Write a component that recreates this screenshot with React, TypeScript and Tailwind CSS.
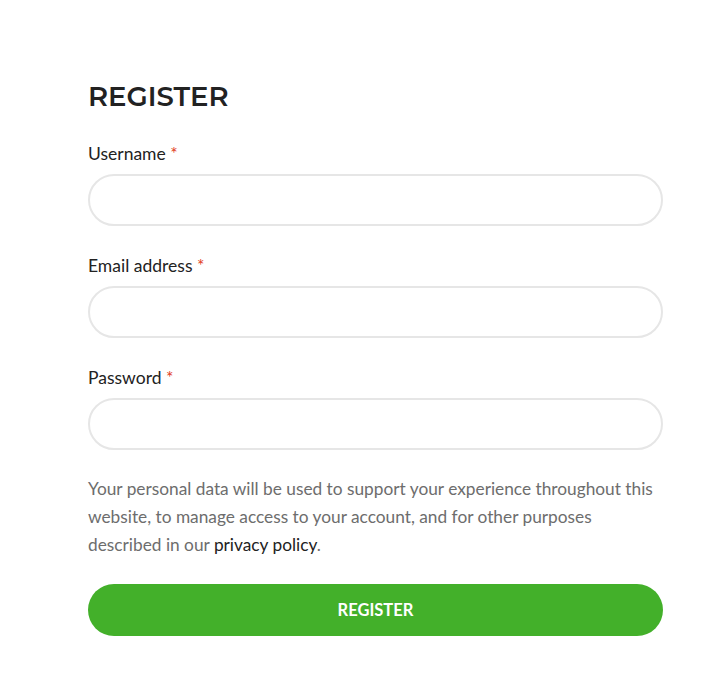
const fields = ["Username", "Email address", "Password"];

export default function App() {
  return (
    <div className="min-h-screen bg-white font-['Lato','Open_Sans',sans-serif]">
      <div className="pl-[88px] pt-[78px] w-[663px]">
        <h2 className="font-['Montserrat','Inter',sans-serif] text-[27.5px] font-semibold leading-[36px] text-[#222]">
          REGISTER
        </h2>
        <form className="mt-[28px]" onSubmit={(e) => e.preventDefault()}>
          {fields.map((label, i) => (
            <div key={label} className={i === fields.length - 1 ? "mb-[24px]" : "mb-[28px]"}>
              <label className="block text-[17.5px] leading-[24px] text-[#222] mb-2">
                {label} <span className="text-[#e2401c]">*</span>
              </label>
              <input
                type={label === "Password" ? "password" : "text"}
                className="block h-[52px] w-full rounded-full border-2 border-[#e6e6e6] bg-white px-5 outline-none"
              />
            </div>
          ))}
          <p className="pt-[1px] text-[17.3px] leading-[28px] text-[#6d6d6d]">
            Your personal data will be used to support your experience throughout this website, to
            manage access to your account, and for other purposes described in our{" "}
            <a href="#" className="text-[#222]">
              privacy policy
            </a>
            .
          </p>
          <button
            type="submit"
            className="mt-[25px] h-[52px] w-full rounded-full bg-[#43b02a] text-[16.5px] font-bold text-white"
          >
            REGISTER
          </button>
        </form>
      </div>
    </div>
  );
}
